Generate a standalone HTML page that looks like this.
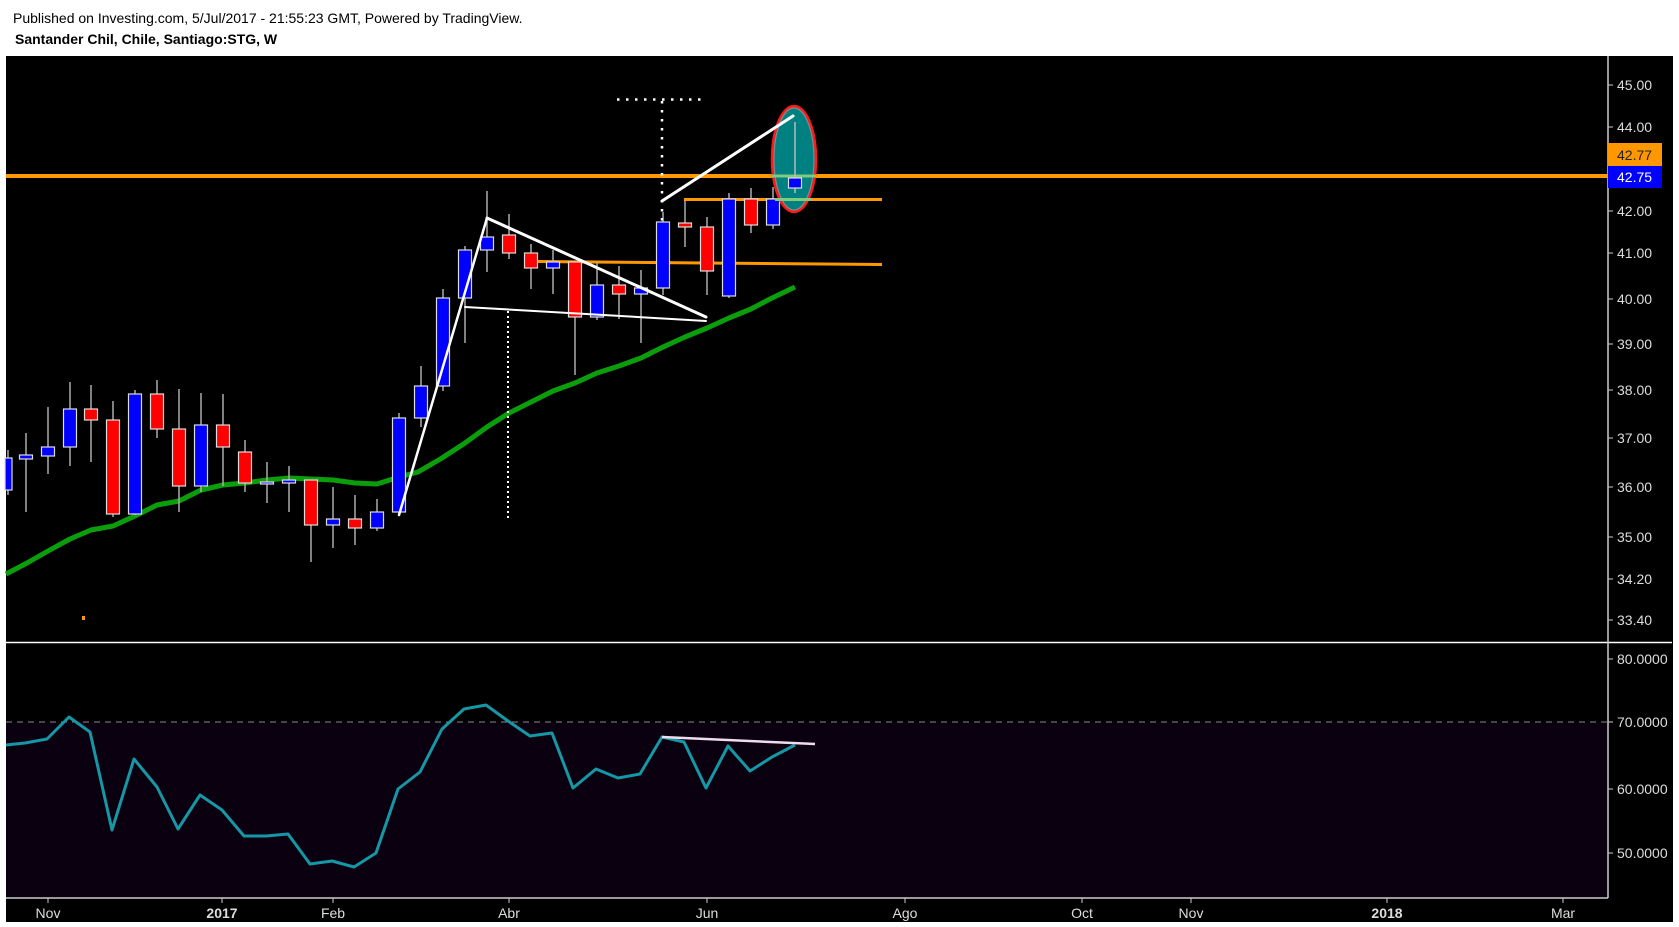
<!DOCTYPE html>
<html><head><meta charset="utf-8"><style>
html,body{margin:0;padding:0;background:#fff;width:1679px;height:927px;overflow:hidden;font-family:"Liberation Sans",Arial,sans-serif}
svg{position:absolute;left:0;top:0}
</style></head><body>
<svg width="1679" height="927" viewBox="0 0 1679 927" xmlns="http://www.w3.org/2000/svg" font-family="Liberation Sans, Arial, sans-serif">
<text x="13" y="23" font-size="14" fill="#000">Published on Investing.com, 5/Jul/2017 - 21:55:23 GMT, Powered by TradingView.</text>
<text x="15" y="44" font-size="14" font-weight="bold" fill="#000">Santander Chil, Chile, Santiago:STG, W</text>
<rect x="6" y="56" width="1667" height="866" fill="#000"/>
<!-- RSI pane -->
<rect x="6" y="722" width="1602" height="176" fill="#0b0010"/>
<line x1="6" y1="722" x2="1608" y2="722" stroke="#888" stroke-dasharray="6,5" stroke-width="1"/>
<line x1="6" y1="642.5" x2="1672" y2="642.5" stroke="#fff" stroke-width="1.5"/>
<line x1="6" y1="898" x2="1608" y2="898" stroke="#ccc" stroke-width="1.5"/>
<line x1="1608" y1="56" x2="1608" y2="898" stroke="#ccc" stroke-width="1.5"/>
<!-- price labels -->
<g font-size="14" fill="#ddd">
<g stroke="#ccc" stroke-width="1">
<line x1="1608" y1="85" x2="1613" y2="85"/><line x1="1608" y1="127" x2="1613" y2="127"/>
<line x1="1608" y1="211" x2="1613" y2="211"/><line x1="1608" y1="253" x2="1613" y2="253"/>
<line x1="1608" y1="299" x2="1613" y2="299"/><line x1="1608" y1="344" x2="1613" y2="344"/>
<line x1="1608" y1="390" x2="1613" y2="390"/><line x1="1608" y1="438" x2="1613" y2="438"/>
<line x1="1608" y1="487" x2="1613" y2="487"/><line x1="1608" y1="537" x2="1613" y2="537"/>
<line x1="1608" y1="579" x2="1613" y2="579"/><line x1="1608" y1="620" x2="1613" y2="620"/>
<line x1="1608" y1="659" x2="1613" y2="659"/><line x1="1608" y1="722" x2="1613" y2="722"/>
<line x1="1608" y1="789" x2="1613" y2="789"/><line x1="1608" y1="853" x2="1613" y2="853"/>
</g>
<text x="1617" y="90">45.00</text><text x="1617" y="132">44.00</text>
<text x="1617" y="216">42.00</text><text x="1617" y="258">41.00</text>
<text x="1617" y="304">40.00</text><text x="1617" y="349">39.00</text>
<text x="1617" y="395">38.00</text><text x="1617" y="443">37.00</text>
<text x="1617" y="492">36.00</text><text x="1617" y="542">35.00</text>
<text x="1617" y="584">34.20</text><text x="1617" y="625">33.40</text>
<text x="1617" y="664">80.0000</text><text x="1617" y="727">70.0000</text>
<text x="1617" y="794">60.0000</text><text x="1617" y="858">50.0000</text>
</g>
<rect x="1608" y="143" width="54" height="23" fill="#ff9800"/>
<text x="1617" y="160" font-size="14" fill="#222">42.77</text>
<rect x="1608" y="166" width="54" height="22" fill="#0000ff"/>
<text x="1617" y="182" font-size="14" fill="#fff">42.75</text>
<!-- time axis -->
<g stroke="#ccc" stroke-width="1">
<line x1="48" y1="898" x2="48" y2="903"/><line x1="222" y1="898" x2="222" y2="903"/>
<line x1="333" y1="898" x2="333" y2="903"/><line x1="509" y1="898" x2="509" y2="903"/>
<line x1="707" y1="898" x2="707" y2="903"/><line x1="905" y1="898" x2="905" y2="903"/>
<line x1="1082" y1="898" x2="1082" y2="903"/><line x1="1191" y1="898" x2="1191" y2="903"/>
<line x1="1387" y1="898" x2="1387" y2="903"/><line x1="1563" y1="898" x2="1563" y2="903"/>
</g>
<g font-size="14" fill="#ddd" text-anchor="middle">
<text x="48" y="918">Nov</text><text x="222" y="918" font-weight="bold">2017</text>
<text x="333" y="918">Feb</text><text x="509" y="918">Abr</text>
<text x="707" y="918">Jun</text><text x="905" y="918">Ago</text>
<text x="1082" y="918">Oct</text><text x="1191" y="918">Nov</text>
<text x="1387" y="918" font-weight="bold">2018</text><text x="1563" y="918">Mar</text>
</g>
<!-- orange lines -->
<line x1="6" y1="176" x2="1608" y2="176" stroke="#ff9800" stroke-width="4"/>
<line x1="684" y1="199.5" x2="882" y2="199.5" stroke="#ff9800" stroke-width="3"/>
<line x1="537" y1="261.5" x2="882" y2="264.5" stroke="#ff9800" stroke-width="3"/>
<rect x="82" y="616" width="3" height="4" fill="#ff9800"/>
<!-- MA -->
<polyline fill="none" stroke="#0a9e0a" stroke-width="5" stroke-linejoin="round" points="6,574 27,563 48,551 70,539 91,530 113,526 135,516 157,505 179,501 201,490 223,485 245,483 267,480 289,478 311,479 333,480 355,483 377,484 399,477 418,472 442,458 465,443 487,427 509,413 531,402 553,391 575,383 597,373 619,366 641,358 663,347 685,337 707,328 729,318 751,309 770,299 795,287"/>
<g stroke="#aaa" stroke-width="1.5">
<line x1="8" y1="450" x2="8" y2="495"/><line x1="26" y1="433" x2="26" y2="512"/><line x1="48" y1="407" x2="48" y2="474"/><line x1="70" y1="382" x2="70" y2="466"/><line x1="91" y1="385" x2="91" y2="462"/><line x1="113" y1="401" x2="113" y2="517"/><line x1="135" y1="390" x2="135" y2="515"/><line x1="157" y1="380" x2="157" y2="438"/><line x1="179" y1="389" x2="179" y2="512"/><line x1="201" y1="393" x2="201" y2="492"/><line x1="223" y1="394" x2="223" y2="486"/><line x1="245" y1="440" x2="245" y2="492"/><line x1="267" y1="462" x2="267" y2="503"/><line x1="289" y1="466" x2="289" y2="512"/><line x1="311" y1="480" x2="311" y2="562"/><line x1="333" y1="487" x2="333" y2="548"/><line x1="355" y1="495" x2="355" y2="545"/><line x1="377" y1="499" x2="377" y2="531"/><line x1="399" y1="413" x2="399" y2="515"/><line x1="421" y1="366" x2="421" y2="427"/><line x1="443" y1="289" x2="443" y2="391"/><line x1="465" y1="246" x2="465" y2="343"/><line x1="487" y1="191" x2="487" y2="272"/><line x1="509" y1="214" x2="509" y2="259"/><line x1="531" y1="244" x2="531" y2="289"/><line x1="553" y1="250" x2="553" y2="294"/><line x1="575" y1="262" x2="575" y2="375"/><line x1="597" y1="262" x2="597" y2="320"/><line x1="619" y1="266" x2="619" y2="319"/><line x1="641" y1="270" x2="641" y2="343"/><line x1="663" y1="212" x2="663" y2="295"/><line x1="685" y1="201" x2="685" y2="247"/><line x1="707" y1="217" x2="707" y2="295"/><line x1="729" y1="193" x2="729" y2="298"/><line x1="751" y1="188" x2="751" y2="233"/><line x1="773" y1="187" x2="773" y2="229"/>
</g>
<g stroke="#ddd" stroke-width="1.2">
<rect x="5" y="458" width="7" height="32" fill="#0000ff"/>
<rect x="19.5" y="455" width="13" height="4" fill="#0000ff"/>
<rect x="41.5" y="447" width="13" height="9" fill="#0000ff"/>
<rect x="63.5" y="409" width="13" height="38" fill="#0000ff"/>
<rect x="84.5" y="409" width="13" height="11" fill="#ff0000"/>
<rect x="106.5" y="420" width="13" height="94" fill="#ff0000"/>
<rect x="128.5" y="394" width="13" height="120" fill="#0000ff"/>
<rect x="150.5" y="394" width="13" height="35" fill="#ff0000"/>
<rect x="172.5" y="429" width="13" height="57" fill="#ff0000"/>
<rect x="194.5" y="425" width="13" height="61" fill="#0000ff"/>
<rect x="216.5" y="425" width="13" height="22" fill="#ff0000"/>
<rect x="238.5" y="452" width="13" height="31" fill="#ff0000"/>
<rect x="260.5" y="482" width="13" height="2" fill="#0000ff"/>
<rect x="282.5" y="480" width="13" height="3" fill="#0000ff"/>
<rect x="304.5" y="480" width="13" height="45" fill="#ff0000"/>
<rect x="326.5" y="519" width="13" height="6" fill="#0000ff"/>
<rect x="348.5" y="519" width="13" height="9" fill="#ff0000"/>
<rect x="370.5" y="512" width="13" height="16" fill="#0000ff"/>
<rect x="392.5" y="418" width="13" height="94" fill="#0000ff"/>
<rect x="414.5" y="386" width="13" height="32" fill="#0000ff"/>
<rect x="436.5" y="298" width="13" height="88" fill="#0000ff"/>
<rect x="458.5" y="250" width="13" height="48" fill="#0000ff"/>
<rect x="480.5" y="237" width="13" height="13" fill="#0000ff"/>
<rect x="502.5" y="235" width="13" height="18" fill="#ff0000"/>
<rect x="524.5" y="253" width="13" height="15" fill="#ff0000"/>
<rect x="546.5" y="262" width="13" height="6" fill="#0000ff"/>
<rect x="568.5" y="262" width="13" height="55" fill="#ff0000"/>
<rect x="590.5" y="285" width="13" height="32" fill="#0000ff"/>
<rect x="612.5" y="285" width="13" height="9" fill="#ff0000"/>
<rect x="634.5" y="288" width="13" height="6" fill="#0000ff"/>
<rect x="656.5" y="222" width="13" height="66" fill="#0000ff"/>
<rect x="678.5" y="223" width="13" height="4" fill="#ff0000"/>
<rect x="700.5" y="227" width="13" height="44" fill="#ff0000"/>
<rect x="722.5" y="199" width="13" height="97" fill="#0000ff"/>
<rect x="744.5" y="199" width="13" height="26" fill="#ff0000"/>
<rect x="766.5" y="199" width="13" height="26" fill="#0000ff"/>
</g>
<!-- ellipse -->
<ellipse cx="794" cy="159" rx="22" ry="53" fill="#008080" stroke="#ff1a1a" stroke-width="2.5"/>
<ellipse cx="794" cy="159" rx="20" ry="51" fill="none" stroke="#888" stroke-width="1.2"/>
<line x1="772" y1="176" x2="816" y2="176" stroke="#7fcc80" stroke-width="3"/>
<line x1="775" y1="199.5" x2="812" y2="199.5" stroke="#7fcc80" stroke-width="3"/>
<line x1="795" y1="122" x2="795" y2="193" stroke="#bbb" stroke-width="1.5"/>
<rect x="788.5" y="178" width="13" height="10" fill="#0000ff" stroke="#ddd" stroke-width="1.2"/>
<!-- white drawings -->
<g stroke="#fff" fill="none" stroke-linecap="round">
<line x1="399" y1="515" x2="487" y2="218" stroke-width="2.5"/>
<line x1="487" y1="218" x2="706" y2="317" stroke-width="3"/>
<line x1="465" y1="307" x2="706" y2="321" stroke-width="2"/>
<line x1="662" y1="201" x2="793" y2="116" stroke-width="3"/>
<line x1="508" y1="311" x2="508" y2="520" stroke-width="2" stroke-dasharray="2,3" stroke-linecap="butt"/>
<line x1="662" y1="101" x2="662" y2="222" stroke-width="2.5" stroke-dasharray="2.5,6.5" stroke-linecap="butt"/>
<line x1="617" y1="99.5" x2="702" y2="99.5" stroke-width="2.5" stroke-dasharray="2.5,6.5" stroke-linecap="butt"/>
</g>
<!-- RSI -->
<polyline fill="none" stroke="#1597a5" stroke-width="3" stroke-linejoin="round" points="6,745 25,743 47,739 69,717 90,732 112,830 134,759 157,787 178,829 200,795 222,810 244,836 266,836 288,834 310,864 332,861 354,867 376,853 398,789 420,772 442,729 464,709 486,705 508,721 530,736 552,733 573,788 596,769 618,778 640,774 662,737 684,742 706,788 728,746 750,771 772,757 795,745"/>
<line x1="662" y1="737" x2="815" y2="744" stroke="#f0dcef" stroke-width="2.5"/>
</svg>
</body></html>
